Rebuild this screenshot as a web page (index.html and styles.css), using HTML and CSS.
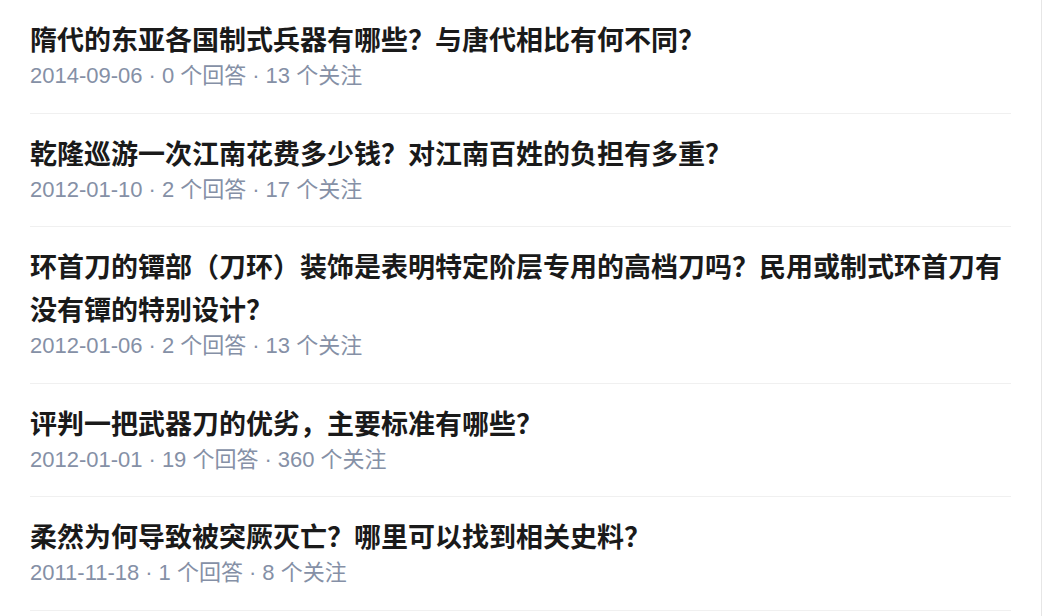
FILE: index.html
```html
<!DOCTYPE html>
<html lang="zh-CN">
<head>
<meta charset="utf-8">
<title>问题列表</title>
<link rel="stylesheet" href="styles.css">
</head>
<body>
<div class="page">
  <ul class="list">
    <li class="item">
      <h2 class="title">隋代的东亚各国制式兵器有哪些？与唐代相比有何不同？</h2>
      <div class="meta"><span>2014-09-06</span><span class="dot">·</span><span>0 个回答</span><span class="dot">·</span><span>13 个关注</span></div>
    </li>
    <li class="item">
      <h2 class="title">乾隆巡游一次江南花费多少钱？对江南百姓的负担有多重？</h2>
      <div class="meta"><span>2012-01-10</span><span class="dot">·</span><span>2 个回答</span><span class="dot">·</span><span>17 个关注</span></div>
    </li>
    <li class="item">
      <h2 class="title">环首刀的镡部（刀环）装饰是表明特定阶层专用的高档刀吗？民用或制式环首刀有没有镡的特别设计？</h2>
      <div class="meta"><span>2012-01-06</span><span class="dot">·</span><span>2 个回答</span><span class="dot">·</span><span>13 个关注</span></div>
    </li>
    <li class="item">
      <h2 class="title">评判一把武器刀的优劣，主要标准有哪些？</h2>
      <div class="meta"><span>2012-01-01</span><span class="dot">·</span><span>19 个回答</span><span class="dot">·</span><span>360 个关注</span></div>
    </li>
    <li class="item">
      <h2 class="title">柔然为何导致被突厥灭亡？哪里可以找到相关史料？</h2>
      <div class="meta"><span>2011-11-18</span><span class="dot">·</span><span>1 个回答</span><span class="dot">·</span><span>8 个关注</span></div>
    </li>
  </ul>
</div>
</body>
</html>
```
FILE: styles.css
```css
html, body {
  margin: 0;
  padding: 0;
  background: #ffffff;
}
body {
  font-family: "Liberation Sans", "Noto Sans CJK SC", sans-serif;
}
.page {
  box-sizing: border-box;
  width: 1042px;
  min-height: 616px;
  padding: 0 30px;
  border-right: 1px solid #e6e6e6;
}
.list {
  list-style: none;
  margin: 0;
  padding: 0;
}
.item {
  padding: 20px 0 23.3px;
  border-bottom: 1px solid #f0f0f0;
}
.title {
  margin: 0;
  font-size: 27px;
  line-height: 43.2px;
  font-weight: 700;
  color: #1a1a1a;
}
.meta {
  font-size: 22px;
  line-height: 26px;
  color: #8590a6;
}
.dot {
  margin: 0 6px;
}
```
